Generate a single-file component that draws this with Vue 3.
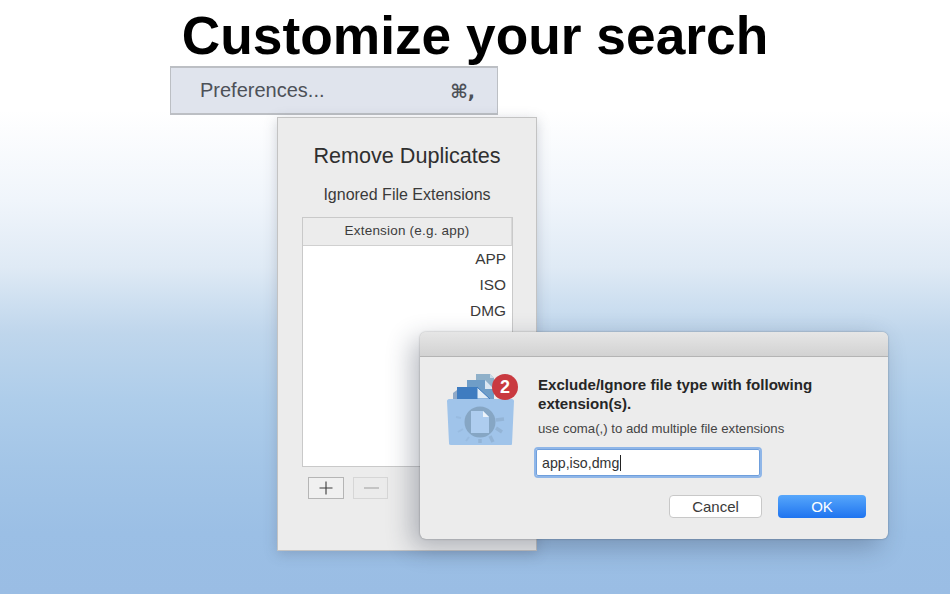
<script setup>
const extensions = ['APP', 'ISO', 'DMG']
</script>

<template>
  <div class="page">
    <h1 class="title">Customize your search</h1>
    <div class="menu">
      <span>Preferences...</span>
      <span class="shortcut">⌘,</span>
    </div>

    <section class="prefs">
      <h2>Remove Duplicates</h2>
      <h3>Ignored File Extensions</h3>
      <div class="table">
        <div class="thead">Extension (e.g. app)</div>
        <div class="tbody">
          <div v-for="e in extensions" :key="e" class="row">{{ e }}</div>
        </div>
      </div>
      <div class="tools">
        <div class="tool">
          <svg width="20" height="18" viewBox="0 0 20 18"><path d="M10 2.5v13M3.5 9h13" stroke="#3a3a3a" stroke-width="1.1" fill="none"/></svg>
        </div>
        <div class="tool off">
          <svg width="20" height="18" viewBox="0 0 20 18"><path d="M3 9h15" stroke="#aaa" stroke-width="1.2" fill="none"/></svg>
        </div>
      </div>
    </section>

    <section class="dialog">
      <div class="titlebar"></div>
      <div class="content">
        <svg class="appicon" width="76" height="76" viewBox="0 0 76 76">
          <path d="M30 1h14l4 4v24H30z" fill="#8fb0c9"/>
          <path d="M44 1l4 4h-4z" fill="#c9dbe9"/>
          <path d="M21 7h18l9 9v14H21z" fill="#6f9dc7"/>
          <path d="M39 7l9 9h-9z" fill="#dbe7f2"/>
          <path d="M7 20l4-3v12H7z" fill="#8fa9c8"/>
          <path d="M11 14h20l13 12v4H11z" fill="#3f7cc0"/>
          <path d="M31 14l13 12H31z" fill="#e3edf6" stroke="#3f7cc0" stroke-width="1"/>
          <path d="M1 28c0-1 1-2 2-2h63c1 0 2 1 2 2l-2 43c0 1-1 1-2 1H5c-2 0-2-1-2-2z" fill="#a0c4ea"/>
          <g fill="none" stroke="#93b4d6" stroke-width="3.5">
            <path d="M50 47l8-1M50 55l6 4M44 63l3 6M34 66v4"/>
          </g>
          <g fill="none" stroke="#98bbe0" stroke-width="2">
            <path d="M23 64l-3 4M17 56l-5 3M15 45l-5-1"/>
          </g>
          <circle cx="34" cy="49" r="15.5" fill="#86a6c4"/>
          <path d="M25 38h12l6 6v16H25z" fill="#aecdef"/>
          <path d="M37 38l6 6h-6z" fill="#edf3fa"/>
          <circle cx="59" cy="14" r="13" fill="#c93a40"/>
          <text x="59" y="19.5" class="badge" text-anchor="middle">2</text>
        </svg>
        <div class="body">
          <p class="heading">Exclude/Ignore file type with following extension(s).</p>
          <p class="hint">use coma(,) to add multiple file extensions</p>
          <div class="field">app,iso,dmg<i class="caret"></i></div>
          <div class="actions">
            <div class="btn">Cancel</div>
            <div class="btn primary">OK</div>
          </div>
        </div>
      </div>
    </section>
  </div>
</template>

<style>
html, body { margin: 0; padding: 0; }
</style>

<style scoped>
.page {
  position: relative;
  width: 950px;
  height: 594px;
  overflow: hidden;
  font-family: "Liberation Sans", Arial, sans-serif;
  background: linear-gradient(to bottom, #ffffff 0, #ffffff 110px, #f0f5fb 200px, #dfeaf5 267px, #bfd6ec 333px, #aecdea 400px, #a3c5e7 467px, #9bbfe5 533px, #9abde4 594px);
  display: flex;
  flex-direction: column;
}
.title {
  margin: 5px 0 0;
  text-align: center;
  font-size: 53.3px;
  line-height: 62px;
  font-weight: 700;
  color: #000;
  white-space: nowrap;
}
.menu {
  box-sizing: border-box;
  width: 328px;
  height: 49px;
  margin: -1px 0 0 170px;
  padding: 0 22px 0 29px;
  display: flex;
  align-items: center;
  justify-content: space-between;
  background: #e0e4ed;
  border: 1px solid #bcbfc4;
  border-width: 2px 1px 2px 1px;
  color: #4d5158;
  font-size: 20px;
}
.shortcut { font-family: "DejaVu Sans", sans-serif; font-size: 19px; font-weight: 700; }
.prefs {
  position: absolute;
  left: 277px;
  top: 117px;
  box-sizing: border-box;
  width: 260px;
  height: 434px;
  background: #ececec;
  border: 1px solid #c3c3c3;
  box-shadow: 0 3px 12px rgba(70, 80, 100, 0.25);
  padding: 25px 24px 0;
  color: #2f2f2f;
  text-align: center;
}
.prefs h2 { margin: 0; font-size: 21.6px; line-height: 26px; font-weight: 400; white-space: nowrap; }
.prefs h3 { margin: 16px 0 0; font-size: 16px; line-height: 20px; font-weight: 400; color: #3a3a3a; white-space: nowrap; }
.table {
  box-sizing: border-box;
  margin-top: 12px;
  width: 211px;
  height: 250px;
  border: 1px solid #c9c9c9;
  display: flex;
  flex-direction: column;
}
.thead {
  height: 28px;
  flex: none;
  box-sizing: border-box;
  background: #ececec;
  border-bottom: 1px solid #d0d0d0;
  border-right: 1px solid #d8d8d8;
  font-size: 13.5px;
  line-height: 26px;
  color: #3c3c3c;
  letter-spacing: 0.2px;
}
.tbody { flex: 1; background: #fff; }
.row {
  height: 26px;
  line-height: 25px;
  text-align: right;
  padding-right: 6px;
  font-size: 15.4px;
  color: #3a3a3a;
}
.tools { display: flex; gap: 9px; margin: 10px 0 0 6px; }
.tool {
  box-sizing: border-box;
  width: 36px;
  height: 22px;
  border: 1px solid #b5b5b5;
  background: #f0f0f0;
  display: flex;
  align-items: center;
  justify-content: center;
}
.tool.off { width: 35px; border-color: #d6d6d6; background: #ebebeb; }
.dialog {
  position: absolute;
  left: 420px;
  top: 332px;
  box-sizing: border-box;
  width: 468px;
  height: 207px;
  border-radius: 6px;
  overflow: hidden;
  background: #ececec;
  box-shadow: 0 0 2px rgba(0,0,0,.35), -8px 8px 26px rgba(40, 50, 70, 0.32);
  color: #222;
}
.titlebar {
  height: 24px;
  background: linear-gradient(to bottom, #e6e6e6, #d2d2d2);
  border-bottom: 1px solid #b4b4b4;
}
.content { display: flex; padding: 16px 22px 0 26px; }
.appicon { flex: none; }
.body { margin-left: 16px; flex: 1; padding-top: 2px; }
.heading {
  margin: 0;
  font-size: 15.1px;
  line-height: 19px;
  font-weight: 700;
  color: #262626;
  width: 300px;
}
.hint { margin: 7px 0 0; font-size: 13.2px; line-height: 17px; color: #444; white-space: nowrap; }
.field {
  box-sizing: border-box;
  width: 224px;
  height: 27px;
  margin: 12px 0 0 -2px;
  background: #fff;
  border: 1px solid #6f9fdc;
  outline: 2px solid #8fb6e8;
  border-radius: 2px;
  padding-left: 5px;
  font-size: 14.2px;
  line-height: 24px;
  color: #333;
  display: flex;
  align-items: center;
}
.caret { display: block; width: 1px; height: 16px; background: #222; margin-left: 1px; }
.actions { display: flex; justify-content: flex-end; gap: 16px; margin-top: 19px; }
.btn {
  box-sizing: border-box;
  width: 93px;
  height: 23px;
  background: #fff;
  border: 1px solid #c8c8c8;
  border-radius: 4px;
  text-align: center;
  font-size: 15px;
  line-height: 21px;
  color: #3a3a3a;
}
.btn.primary {
  width: 88px;
  border: 0;
  line-height: 23px;
  color: #fff;
  background: linear-gradient(to bottom, #57a7fb, #1f74f0);
}
.badge { font: 700 18px "Liberation Sans", Arial, sans-serif; fill: #fff; }
</style>
